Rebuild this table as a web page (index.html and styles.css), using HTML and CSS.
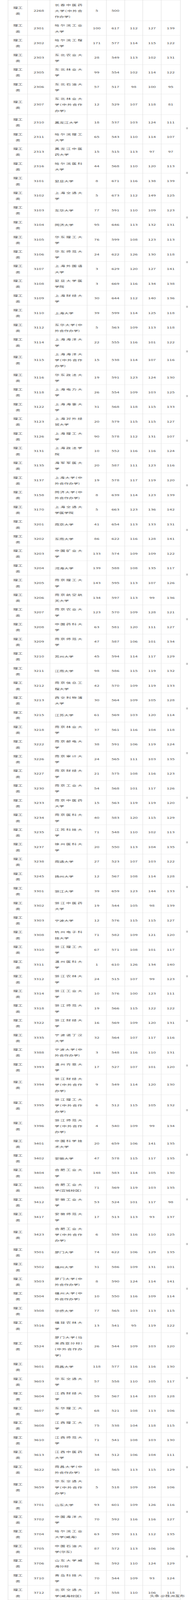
FILE: index.html
```html
<!DOCTYPE html>
<html lang="zh-CN">
<head>
<meta charset="utf-8">
<title>录取分数</title>
<link rel="stylesheet" href="styles.css">
</head>
<body>
<div class="frame">
<div class="page">
<table class="sheet">
<colgroup><col class="w1"><col class="w2"><col class="w3"><col class="w4"><col class="w5"><col class="w6"><col class="w7"><col class="w8"></colgroup>
<tbody>
<tr><td class="kind">理工类</td><td>2268</td><td class="name">长春中医药大学(中外合作办学)</td><td>5</td><td>500</td><td></td><td></td><td></td></tr>
<tr><td class="kind">理工类</td><td>2301</td><td class="name">哈尔滨工业大学</td><td>100</td><td>617</td><td>112</td><td>127</td><td>139</td></tr>
<tr><td class="kind">理工类</td><td>2302</td><td class="name">哈尔滨工程大学</td><td>171</td><td>577</td><td>114</td><td>115</td><td>122</td></tr>
<tr><td class="kind">理工类</td><td>2303</td><td class="name">东北农业大学</td><td>28</td><td>549</td><td>113</td><td>102</td><td>131</td></tr>
<tr><td class="kind">理工类</td><td>2305</td><td class="name">东北林业大学</td><td>99</td><td>554</td><td>102</td><td>114</td><td>122</td></tr>
<tr><td class="kind">理工类</td><td>2306</td><td class="name">东北石油大学</td><td>57</td><td>517</td><td>98</td><td>100</td><td>95</td></tr>
<tr><td class="kind">理工类</td><td>2307</td><td class="name">东北林业大学(中外合作办学)</td><td>12</td><td>529</td><td>107</td><td>118</td><td>81</td></tr>
<tr><td class="kind">理工类</td><td>2310</td><td class="name">黑龙江大学</td><td>18</td><td>537</td><td>103</td><td>124</td><td>111</td></tr>
<tr><td class="kind">理工类</td><td>2311</td><td class="name">哈尔滨理工大学</td><td>65</td><td>543</td><td>110</td><td>114</td><td>107</td></tr>
<tr><td class="kind">理工类</td><td>2313</td><td class="name">黑龙江中医药大学</td><td>15</td><td>515</td><td>113</td><td>97</td><td>97</td></tr>
<tr><td class="kind">理工类</td><td>2316</td><td class="name">哈尔滨医科大学</td><td>44</td><td>568</td><td>110</td><td>120</td><td>113</td></tr>
<tr><td class="kind">理工类</td><td>3101</td><td class="name">复旦大学</td><td>8</td><td>671</td><td>116</td><td>138</td><td>139</td></tr>
<tr><td class="kind">理工类</td><td>3102</td><td class="name">上海交通大学</td><td>5</td><td>673</td><td>112</td><td>149</td><td>125</td></tr>
<tr><td class="kind">理工类</td><td>3103</td><td class="name">东华大学</td><td>77</td><td>591</td><td>110</td><td>109</td><td>123</td></tr>
<tr><td class="kind">理工类</td><td>3104</td><td class="name">同济大学</td><td>95</td><td>646</td><td>113</td><td>132</td><td>131</td></tr>
<tr><td class="kind">理工类</td><td>3105</td><td class="name">华东理工大学</td><td>76</td><td>599</td><td>108</td><td>123</td><td>113</td></tr>
<tr><td class="kind">理工类</td><td>3106</td><td class="name">华东师范大学</td><td>24</td><td>622</td><td>126</td><td>130</td><td>118</td></tr>
<tr><td class="kind">理工类</td><td>3107</td><td class="name">上海外国语大学</td><td>3</td><td>629</td><td>120</td><td>127</td><td>141</td></tr>
<tr><td class="kind">理工类</td><td>3108</td><td class="name">复旦大学医学院</td><td>3</td><td>669</td><td>116</td><td>134</td><td>138</td></tr>
<tr><td class="kind">理工类</td><td>3109</td><td class="name">上海财经大学</td><td>30</td><td>644</td><td>112</td><td>140</td><td>136</td></tr>
<tr><td class="kind">理工类</td><td>3110</td><td class="name">上海大学</td><td>39</td><td>599</td><td>114</td><td>125</td><td>118</td></tr>
<tr><td class="kind">理工类</td><td>3112</td><td class="name">东华大学(中外合作办学)</td><td>5</td><td>563</td><td>109</td><td>113</td><td>118</td></tr>
<tr><td class="kind">理工类</td><td>3114</td><td class="name">上海海洋大学</td><td>22</td><td>555</td><td>116</td><td>101</td><td>122</td></tr>
<tr><td class="kind">理工类</td><td>3115</td><td class="name">上海海洋大学(中外合作办学)</td><td>15</td><td>538</td><td>114</td><td>107</td><td>116</td></tr>
<tr><td class="kind">理工类</td><td>3116</td><td class="name">华东政法大学</td><td>19</td><td>591</td><td>123</td><td>124</td><td>130</td></tr>
<tr><td class="kind">理工类</td><td>3118</td><td class="name">上海电力大学</td><td>26</td><td>554</td><td>109</td><td>103</td><td>125</td></tr>
<tr><td class="kind">理工类</td><td>3122</td><td class="name">上海海事大学</td><td>31</td><td>568</td><td>118</td><td>115</td><td>133</td></tr>
<tr><td class="kind">理工类</td><td>3123</td><td class="name">上海对外经贸大学</td><td>20</td><td>579</td><td>115</td><td>115</td><td>127</td></tr>
<tr><td class="kind">理工类</td><td>3126</td><td class="name">上海理工大学</td><td>90</td><td>578</td><td>112</td><td>131</td><td>107</td></tr>
<tr><td class="kind">理工类</td><td>3131</td><td class="name">上海政法学院</td><td>10</td><td>552</td><td>116</td><td>116</td><td>124</td></tr>
<tr><td class="kind">理工类</td><td>3135</td><td class="name">海军军医大学</td><td>20</td><td>587</td><td>111</td><td>123</td><td>116</td></tr>
<tr><td class="kind">理工类</td><td>3137</td><td class="name">上海大学(中外合作办学)</td><td>19</td><td>578</td><td>117</td><td>119</td><td>120</td></tr>
<tr><td class="kind">理工类</td><td>3158</td><td class="name">同济大学(中外合作办学)</td><td>8</td><td>639</td><td>114</td><td>123</td><td>139</td></tr>
<tr><td class="kind">理工类</td><td>3170</td><td class="name">上海交通大学医学院</td><td>5</td><td>663</td><td>123</td><td>136</td><td>142</td></tr>
<tr><td class="kind">理工类</td><td>3201</td><td class="name">南京大学</td><td>41</td><td>654</td><td>113</td><td>133</td><td>131</td></tr>
<tr><td class="kind">理工类</td><td>3202</td><td class="name">东南大学</td><td>86</td><td>622</td><td>116</td><td>128</td><td>141</td></tr>
<tr><td class="kind">理工类</td><td>3203</td><td class="name">中国矿业大学</td><td>133</td><td>574</td><td>109</td><td>109</td><td>122</td></tr>
<tr><td class="kind">理工类</td><td>3204</td><td class="name">河海大学</td><td>139</td><td>588</td><td>108</td><td>135</td><td>117</td></tr>
<tr><td class="kind">理工类</td><td>3205</td><td class="name">南京理工大学</td><td>143</td><td>595</td><td>113</td><td>107</td><td>126</td></tr>
<tr><td class="kind">理工类</td><td>3206</td><td class="name">南京航空航天大学</td><td>134</td><td>597</td><td>113</td><td>99</td><td>136</td></tr>
<tr><td class="kind">理工类</td><td>3207</td><td class="name">南京农业大学</td><td>123</td><td>570</td><td>109</td><td>128</td><td>121</td></tr>
<tr><td class="kind">理工类</td><td>3208</td><td class="name">中国药科大学</td><td>63</td><td>581</td><td>120</td><td>111</td><td>127</td></tr>
<tr><td class="kind">理工类</td><td>3209</td><td class="name">南京师范大学</td><td>47</td><td>587</td><td>106</td><td>101</td><td>134</td></tr>
<tr><td class="kind">理工类</td><td>3210</td><td class="name">苏州大学</td><td>45</td><td>594</td><td>114</td><td>117</td><td>129</td></tr>
<tr><td class="kind">理工类</td><td>3211</td><td class="name">江南大学</td><td>98</td><td>586</td><td>115</td><td>119</td><td>132</td></tr>
<tr><td class="kind">理工类</td><td>3212</td><td class="name">南京信息工程大学</td><td>42</td><td>570</td><td>109</td><td>119</td><td>133</td></tr>
<tr><td class="kind">理工类</td><td>3213</td><td class="name">西交利物浦大学</td><td>30</td><td>564</td><td>109</td><td>105</td><td>128</td></tr>
<tr><td class="kind">理工类</td><td>3215</td><td class="name">江苏大学</td><td>61</td><td>569</td><td>103</td><td>120</td><td>114</td></tr>
<tr><td class="kind">理工类</td><td>3218</td><td class="name">南京林业大学</td><td>37</td><td>561</td><td>116</td><td>104</td><td>118</td></tr>
<tr><td class="kind">理工类</td><td>3222</td><td class="name">南京邮电大学</td><td>38</td><td>591</td><td>106</td><td>119</td><td>124</td></tr>
<tr><td class="kind">理工类</td><td>3226</td><td class="name">南京审计大学</td><td>24</td><td>565</td><td>111</td><td>103</td><td>135</td></tr>
<tr><td class="kind">理工类</td><td>3227</td><td class="name">南京财经大学</td><td>21</td><td>575</td><td>108</td><td>116</td><td>123</td></tr>
<tr><td class="kind">理工类</td><td>3230</td><td class="name">南京工业大学</td><td>54</td><td>568</td><td>101</td><td>117</td><td>126</td></tr>
<tr><td class="kind">理工类</td><td>3233</td><td class="name">南京中医药大学</td><td>15</td><td>563</td><td>119</td><td>119</td><td>120</td></tr>
<tr><td class="kind">理工类</td><td>3234</td><td class="name">南京医科大学</td><td>40</td><td>583</td><td>120</td><td>115</td><td>129</td></tr>
<tr><td class="kind">理工类</td><td>3235</td><td class="name">江苏科技大学</td><td>71</td><td>548</td><td>110</td><td>102</td><td>113</td></tr>
<tr><td class="kind">理工类</td><td>3237</td><td class="name">徐州医科大学</td><td>20</td><td>550</td><td>113</td><td>104</td><td>135</td></tr>
<tr><td class="kind">理工类</td><td>3238</td><td class="name">南通大学</td><td>27</td><td>523</td><td>107</td><td>103</td><td>122</td></tr>
<tr><td class="kind">理工类</td><td>3245</td><td class="name">扬州大学</td><td>12</td><td>567</td><td>108</td><td>114</td><td>128</td></tr>
<tr><td class="kind">理工类</td><td>3301</td><td class="name">浙江大学</td><td>39</td><td>659</td><td>123</td><td>144</td><td>133</td></tr>
<tr><td class="kind">理工类</td><td>3302</td><td class="name">浙江中医药大学</td><td>19</td><td>544</td><td>105</td><td>98</td><td>139</td></tr>
<tr><td class="kind">理工类</td><td>3303</td><td class="name">宁波大学</td><td>12</td><td>576</td><td>115</td><td>115</td><td>127</td></tr>
<tr><td class="kind">理工类</td><td>3308</td><td class="name">杭州电子科技大学</td><td>71</td><td>582</td><td>109</td><td>121</td><td>120</td></tr>
<tr><td class="kind">理工类</td><td>3310</td><td class="name">浙江理工大学</td><td>67</td><td>571</td><td>108</td><td>101</td><td>117</td></tr>
<tr><td class="kind">理工类</td><td>3311</td><td class="name">温州医科大学</td><td>1</td><td>610</td><td>126</td><td>134</td><td>140</td></tr>
<tr><td class="kind">理工类</td><td>3312</td><td class="name">浙江农林大学</td><td>24</td><td>515</td><td>107</td><td>99</td><td>123</td></tr>
<tr><td class="kind">理工类</td><td>3314</td><td class="name">浙江工业大学</td><td>10</td><td>576</td><td>100</td><td>123</td><td>111</td></tr>
<tr><td class="kind">理工类</td><td>3318</td><td class="name">浙江师范大学</td><td>19</td><td>566</td><td>115</td><td>122</td><td>122</td></tr>
<tr><td class="kind">理工类</td><td>3322</td><td class="name">浙江财经大学</td><td>16</td><td>569</td><td>109</td><td>120</td><td>131</td></tr>
<tr><td class="kind">理工类</td><td>3335</td><td class="name">宁波诺丁汉大学</td><td>32</td><td>564</td><td>107</td><td>117</td><td>116</td></tr>
<tr><td class="kind">理工类</td><td>3388</td><td class="name">宁波大学(中外合作办学)</td><td>3</td><td>548</td><td>116</td><td>110</td><td>131</td></tr>
<tr><td class="kind">理工类</td><td>3393</td><td class="name">温州肯恩大学</td><td>17</td><td>527</td><td>107</td><td>101</td><td>120</td></tr>
<tr><td class="kind">理工类</td><td>3394</td><td class="name">浙江财经大学(中外合作办学)</td><td>9</td><td>549</td><td>114</td><td>120</td><td>130</td></tr>
<tr><td class="kind">理工类</td><td>3395</td><td class="name">浙江理工大学(中外合作办学)</td><td>6</td><td>512</td><td>115</td><td>105</td><td>132</td></tr>
<tr><td class="kind">理工类</td><td>3396</td><td class="name">浙江师范大学(中外合作办学)</td><td>4</td><td>540</td><td>109</td><td>99</td><td>134</td></tr>
<tr><td class="kind">理工类</td><td>3401</td><td class="name">中国科学技术大学</td><td>20</td><td>659</td><td>106</td><td>141</td><td>135</td></tr>
<tr><td class="kind">理工类</td><td>3402</td><td class="name">安徽大学</td><td>47</td><td>578</td><td>115</td><td>117</td><td>135</td></tr>
<tr><td class="kind">理工类</td><td>3404</td><td class="name">合肥工业大学</td><td>148</td><td>583</td><td>114</td><td>105</td><td>130</td></tr>
<tr><td class="kind">理工类</td><td>3405</td><td class="name">合肥工业大学(宣城校区)</td><td>71</td><td>569</td><td>119</td><td>103</td><td>135</td></tr>
<tr><td class="kind">理工类</td><td>3412</td><td class="name">安徽工业大学</td><td>53</td><td>524</td><td>101</td><td>117</td><td>98</td></tr>
<tr><td class="kind">理工类</td><td>3417</td><td class="name">安徽师范大学</td><td>17</td><td>513</td><td>113</td><td>93</td><td>137</td></tr>
<tr><td class="kind">理工类</td><td>3423</td><td class="name">合肥工业大学(中外合作办学)</td><td>6</td><td>559</td><td>116</td><td>110</td><td>125</td></tr>
<tr><td class="kind">理工类</td><td>3501</td><td class="name">厦门大学</td><td>74</td><td>622</td><td>106</td><td>129</td><td>135</td></tr>
<tr><td class="kind">理工类</td><td>3502</td><td class="name">福州大学</td><td>31</td><td>586</td><td>109</td><td>131</td><td>101</td></tr>
<tr><td class="kind">理工类</td><td>3503</td><td class="name">厦门大学(中外合作办学)</td><td>8</td><td>590</td><td>124</td><td>114</td><td>141</td></tr>
<tr><td class="kind">理工类</td><td>3504</td><td class="name">福州大学(中外合作办学)</td><td>10</td><td>550</td><td>116</td><td>109</td><td>114</td></tr>
<tr><td class="kind">理工类</td><td>3508</td><td class="name">华侨大学</td><td>77</td><td>565</td><td>103</td><td>113</td><td>115</td></tr>
<tr><td class="kind">理工类</td><td>3516</td><td class="name">福建农林大学</td><td>13</td><td>541</td><td>95</td><td>119</td><td>122</td></tr>
<tr><td class="kind">理工类</td><td>3524</td><td class="name">厦门大学(马来西亚分校)(中外合作办学)</td><td>26</td><td>544</td><td>109</td><td>103</td><td>120</td></tr>
<tr><td class="kind">理工类</td><td>3601</td><td class="name">南昌大学</td><td>118</td><td>577</td><td>116</td><td>116</td><td>130</td></tr>
<tr><td class="kind">理工类</td><td>3603</td><td class="name">华东交通大学</td><td>57</td><td>558</td><td>110</td><td>105</td><td>117</td></tr>
<tr><td class="kind">理工类</td><td>3604</td><td class="name">江西财经大学</td><td>59</td><td>567</td><td>114</td><td>103</td><td>128</td></tr>
<tr><td class="kind">理工类</td><td>3607</td><td class="name">东华理工大学</td><td>68</td><td>521</td><td>108</td><td>113</td><td>106</td></tr>
<tr><td class="kind">理工类</td><td>3608</td><td class="name">江西理工大学</td><td>75</td><td>538</td><td>104</td><td>118</td><td>115</td></tr>
<tr><td class="kind">理工类</td><td>3610</td><td class="name">江西师范大学</td><td>71</td><td>541</td><td>108</td><td>103</td><td>130</td></tr>
<tr><td class="kind">理工类</td><td>3613</td><td class="name">江西中医药大学</td><td>34</td><td>512</td><td>106</td><td>104</td><td>111</td></tr>
<tr><td class="kind">理工类</td><td>3622</td><td class="name">南昌大学(中外合作办学)</td><td>10</td><td>565</td><td>113</td><td>115</td><td>129</td></tr>
<tr><td class="kind">理工类</td><td>3659</td><td class="name">华东交通大学(中外合作办学)</td><td>5</td><td>518</td><td>109</td><td>104</td><td>106</td></tr>
<tr><td class="kind">理工类</td><td>3701</td><td class="name">山东大学</td><td>93</td><td>601</td><td>109</td><td>126</td><td>116</td></tr>
<tr><td class="kind">理工类</td><td>3702</td><td class="name">中国海洋大学</td><td>70</td><td>592</td><td>116</td><td>116</td><td>127</td></tr>
<tr><td class="kind">理工类</td><td>3704</td><td class="name">哈尔滨工业大学(威海)</td><td>63</td><td>599</td><td>111</td><td>112</td><td>135</td></tr>
<tr><td class="kind">理工类</td><td>3705</td><td class="name">中国石油大学(华东)</td><td>87</td><td>572</td><td>113</td><td>106</td><td>106</td></tr>
<tr><td class="kind">理工类</td><td>3706</td><td class="name">山东大学威海分校</td><td>36</td><td>592</td><td>110</td><td>124</td><td>129</td></tr>
<tr><td class="kind">理工类</td><td>3710</td><td class="name">青岛科技大学</td><td>70</td><td>544</td><td>109</td><td>93</td><td>124</td></tr>
<tr><td class="kind">理工类</td><td>3712</td><td class="name">北京交通大学(威海校区)</td><td>23</td><td>558</td><td>110</td><td>106</td><td>118</td></tr>
</tbody>
</table>
<div class="gutter"></div>
<div class="watermark">头条 @株洲发布</div>
</div>
</div>
</body>
</html>
```

FILE: styles.css
```css
html, body {
  margin: 0;
  padding: 0;
  background: #ffffff;
  overflow: hidden;
}

/* The browser window is 4096px tall: the frame clips to it. */
.frame {
  width: 480px;
  height: 4096px;
  overflow: hidden;
}

/* The sheet is laid out at its natural 480×7983 size and then fitted
   vertically into the window. */
.page {
  position: relative;
  display: flex;
  align-items: flex-start;
  width: 480px;
  height: 7983px;
  overflow: hidden;
  transform: scaleY(0.51309);
  transform-origin: 0 0;
}

.sheet {
  flex: none;
  margin-left: 20px;
  width: 440px;
  border-collapse: collapse;
  table-layout: fixed;
  font-family: "Noto Sans CJK SC", "Noto Sans", sans-serif;
  font-size: 12px;
  line-height: 29.7px;
  color: #4e4e4e;
}

.w1 { width: 50.3px; }
.w2 { width: 56.4px; }
.w3 { width: 95.6px; }
.w4 { width: 48.4px; }
.w5 { width: 47px; }
.w6 { width: 46.6px; }
.w7 { width: 46.4px; }
.w8 { width: 49.3px; }

.sheet td {
  border: 1px solid #dcdcdc;
  padding: 7.6px 0 5.2px;
  text-align: center;
  vertical-align: middle;
}

.sheet td.kind {
  padding-left: 8px;
  padding-right: 8px;
}

.sheet td.name {
  text-align: justify;
  padding-left: 12px;
  padding-right: 12px;
}

.gutter {
  flex: 1;
  align-self: stretch;
  margin-top: 635px;
  background-image: linear-gradient(to bottom, #c9c9c9 0, #c9c9c9 10px, transparent 10px);
  background-size: 5px 222.7px;
  background-repeat: repeat-y;
  background-position: right top;
}

.watermark {
  position: absolute;
  left: 382px;
  top: 7955px;
  font-family: "Noto Sans CJK SC", "Noto Sans", sans-serif;
  font-size: 12.5px;
  line-height: 16px;
  color: #5a5a5a;
  text-shadow: 0 0 2px #ffffff, 0 0 2px #ffffff;
  white-space: nowrap;
}
```
